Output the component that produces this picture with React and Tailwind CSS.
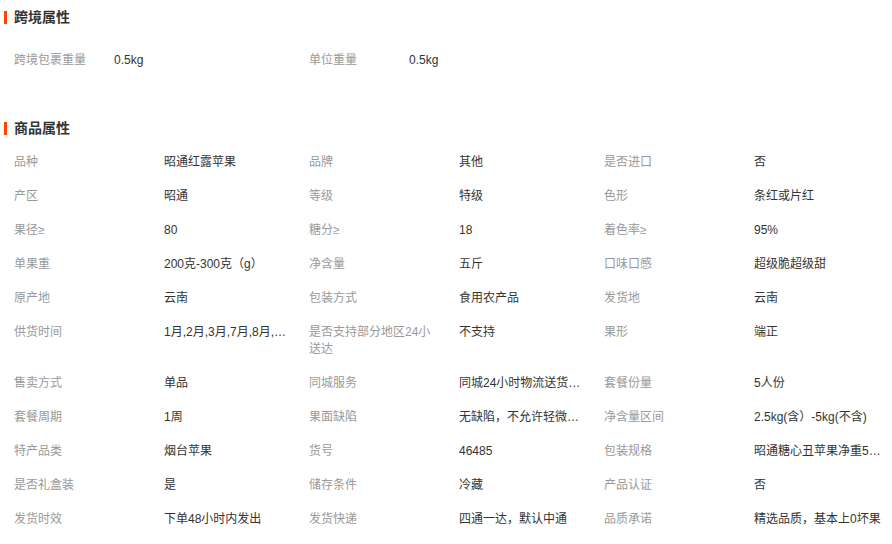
import React from "react";

const cross = [
  ["跨境包裹重量", "0.5kg"],
  ["单位重量", "0.5kg"],
];

const props = [
  ["品种", "昭通红露苹果"], ["品牌", "其他"], ["是否进口", "否"],
  ["产区", "昭通"], ["等级", "特级"], ["色形", "条红或片红"],
  ["果径≥", "80"], ["糖分≥", "18"], ["着色率≥", "95%"],
  ["单果重", "200克-300克（g）"], ["净含量", "五斤"], ["口味口感", "超级脆超级甜"],
  ["原产地", "云南"], ["包装方式", "食用农产品"], ["发货地", "云南"],
  ["供货时间", "1月,2月,3月,7月,8月,9月,10月,11月,12月"], ["是否支持部分地区24小送达", "不支持"], ["果形", "端正"],
  ["售卖方式", "单品"], ["同城服务", "同城24小时物流送货上门"], ["套餐份量", "5人份"],
  ["套餐周期", "1周"], ["果面缺陷", "无缺陷，不允许轻微碰伤"], ["净含量区间", "2.5kg(含）-5kg(不含)"],
  ["特产品类", "烟台苹果"], ["货号", "46485"], ["包装规格", "昭通糖心丑苹果净重5斤装"],
  ["是否礼盒装", "是"], ["储存条件", "冷藏"], ["产品认证", "否"],
  ["发货时效", "下单48小时内发出"], ["发货快递", "四通一达，默认中通"], ["品质承诺", "精选品质，基本上0坏果"],
];

function Heading({ title }) {
  return (
    <div className="flex items-center h-[20px] pl-[4px]">
      <span className="w-[3px] h-[13px] bg-[#ff4400]" />
      <span className="ml-[7px] text-[14px] font-bold text-[#333] leading-[20px]">{title}</span>
    </div>
  );
}

export default function App() {
  return (
    <div
      className="w-[892px] h-[544px] bg-white overflow-hidden text-[12px] leading-[17px]"
      style={{ fontFamily: '"Liberation Sans", "Noto Sans CJK SC", sans-serif' }}
    >
      <div className="pt-[7px]">
        <Heading title="跨境属性" />
        <div className="mt-[15px] pl-[14px] flex">
          {cross.map(([k, v]) => (
            <div key={k} className="flex w-[295px] pt-[10px] pb-[7px]">
              <div className="w-[100px] text-[#999]">{k}</div>
              <div className="w-[125px] text-[#333] truncate">{v}</div>
            </div>
          ))}
        </div>
      </div>

      <div className="mt-[42px]">
        <Heading title="商品属性" />
        <div className="mt-[6px] pl-[14px] grid grid-cols-[150px_145px_150px_145px_150px_130px]">
          {props.map(([k, v], i) => (
            <React.Fragment key={k}>
              <div className="pt-[10px] pb-[7px]">
                <div className="w-[125px] text-[#999]">{k}</div>
              </div>
              <div className="pt-[10px] pb-[7px]">
                <div className={`${i % 3 === 2 ? "w-[130px]" : "w-[125px]"} text-[#333] truncate`}>{v}</div>
              </div>
            </React.Fragment>
          ))}
        </div>
      </div>
    </div>
  );
}
